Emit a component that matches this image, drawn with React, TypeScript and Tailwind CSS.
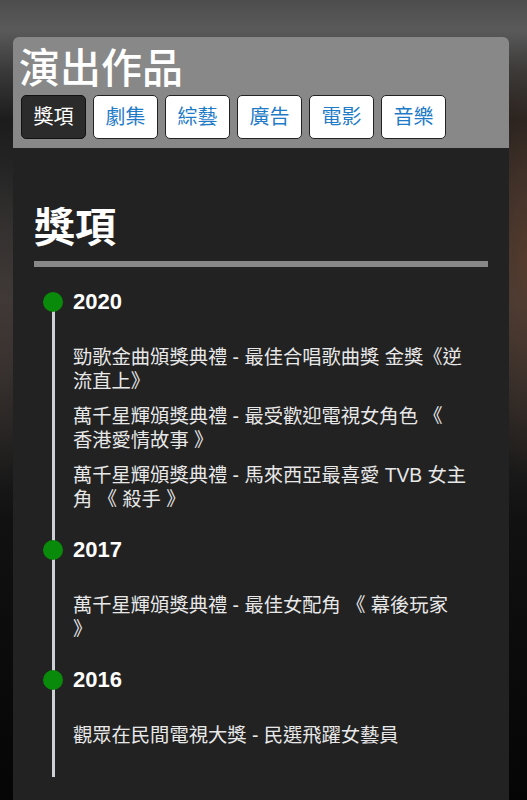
import React from "react";

type YearBlock = {
  year: string;
  items: string[];
};

const TABS = ["獎項", "劇集", "綜藝", "廣告", "電影", "音樂"];

const AWARDS: YearBlock[] = [
  {
    year: "2020",
    items: [
      "勁歌金曲頒獎典禮 - 最佳合唱歌曲獎 金獎《逆流直上》",
      "萬千星輝頒獎典禮 - 最受歡迎電視女角色 《 香港愛情故事 》",
      "萬千星輝頒獎典禮 - 馬來西亞最喜愛 TVB 女主角 《 殺手 》",
    ],
  },
  {
    year: "2017",
    items: ["萬千星輝頒獎典禮 - 最佳女配角 《 幕後玩家 》"],
  },
  {
    year: "2016",
    items: ["觀眾在民間電視大獎 - 民選飛躍女藝員"],
  },
];

const FONT = "font-['Liberation_Sans','Noto_Sans_CJK_TC',sans-serif]";

export default function App() {
  return (
    <div
      className={`min-h-[800px] w-full overflow-hidden pt-[37px] ${FONT} bg-[radial-gradient(ellipse_60px_220px_at_100%_260px,rgba(95,60,42,0.75),transparent),radial-gradient(ellipse_50px_160px_at_0%_330px,rgba(70,55,50,0.6),transparent),linear-gradient(to_bottom,#4d4d4d_0px,#5a5a5a_30px,#3a3a3a_70px,#1c1c1c_120px,#2a2a2a_200px,#3a3a3a_300px,#222_420px,#111_520px,#050505_800px)]`}
    >
      <div className="ml-[13px] w-[496px]">
        {/* header */}
        <div className="rounded-t-[6px] bg-[#888888] px-[8px] pb-[9px] pt-[7px]">
          <h1 className="-ml-[2px] text-[41px] font-medium leading-[50px] text-white">
            演出作品
          </h1>
          <div className="mt-[1px] flex gap-[7px]">
            {TABS.map((tab, i) => (
              <button
                key={tab}
                type="button"
                className={
                  i === 0
                    ? "flex h-[44px] w-[65px] items-center justify-center rounded-[5px] border border-[#111] bg-[#2b2b2b] text-[20px] text-white"
                    : "flex h-[44px] w-[65px] items-center justify-center rounded-[5px] border border-[#222] bg-white text-[20px] text-[#1f7bc8]"
                }
              >
                {tab}
              </button>
            ))}
          </div>
        </div>

        {/* content */}
        <div className="bg-[#222222] px-[21px] pb-[30px] pt-[56px]">
          <h2 className="text-[41px] font-bold leading-[48px] text-white">獎項</h2>
          <div className="mt-[9px] h-[6px] bg-[#888888]" />

          <div className="relative mt-[21px]">
            <div className="absolute bottom-[-5px] left-[18px] top-[14px] w-[3px] bg-[#cdd1d5]" />
            {AWARDS.map((block) => (
              <section key={block.year} className="relative pb-[24px] pl-[39px]">
                <span className="absolute left-[9px] top-[4px] h-[20px] w-[20px] rounded-full bg-[#0a8a0a]" />
                <h3 className="text-[22px] font-bold leading-[28px] text-white">
                  {block.year}
                </h3>
                <ul className="mt-[30px] space-y-[11px]">
                  {block.items.map((item) => (
                    <li
                      key={item}
                      className="w-[20.42em] text-[19.3px] leading-[24px] text-[#e8e8e8] [text-spacing-trim:space-all]"
                    >
                      {item}
                    </li>
                  ))}
                </ul>
              </section>
            ))}
          </div>
        </div>
      </div>
    </div>
  );
}
